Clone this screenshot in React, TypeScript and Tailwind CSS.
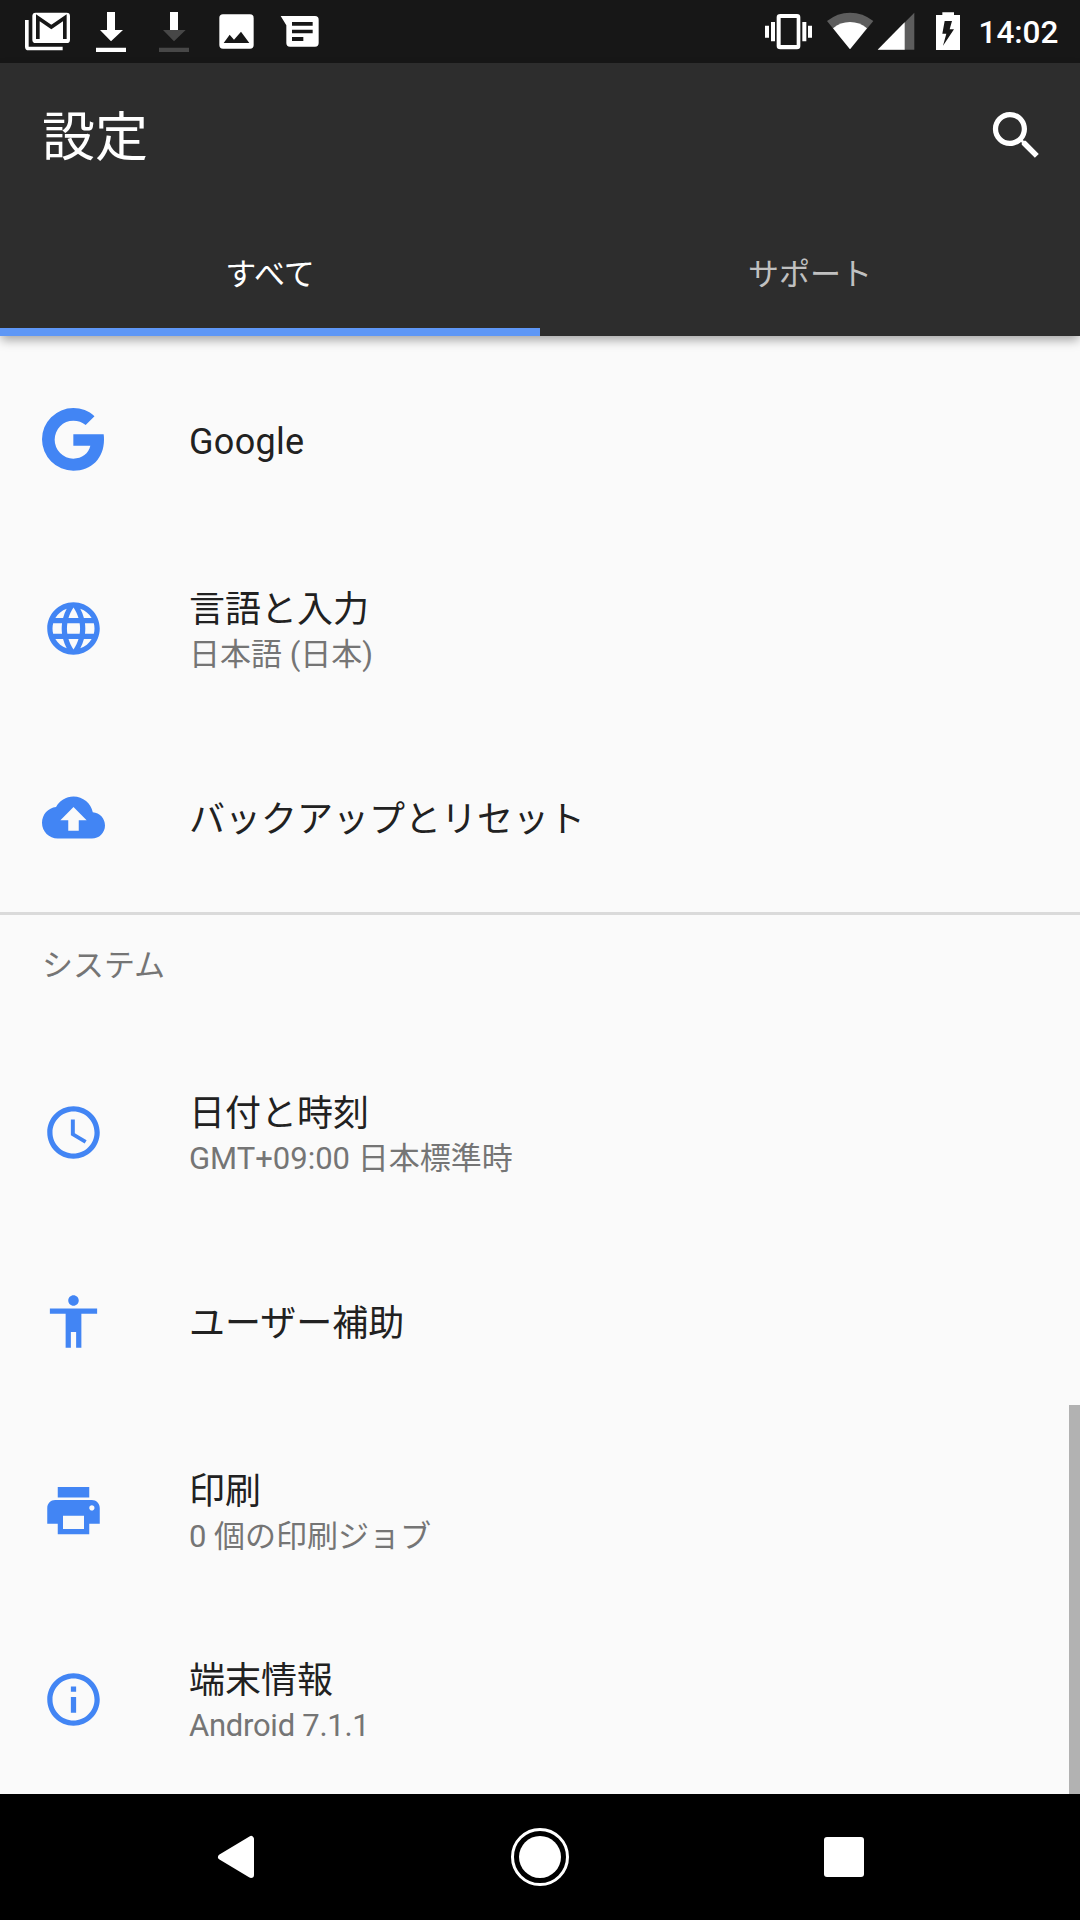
import type { ReactNode } from "react";

const GLYPHS = {
  language:
    "M11.99 2C6.47 2 2 6.48 2 12s4.47 10 9.99 10C17.52 22 22 17.52 22 12S17.52 2 11.99 2zm6.93 6h-2.95c-.32-1.25-.78-2.45-1.38-3.56 1.84.63 3.37 1.91 4.33 3.56zM12 4.04c.83 1.2 1.48 2.53 1.91 3.96h-3.82c.43-1.43 1.08-2.76 1.91-3.96zM4.26 14C4.1 13.36 4 12.69 4 12s.1-1.36.26-2h3.38c-.08.66-.14 1.32-.14 2s.06 1.34.14 2H4.26zm.82 2h2.95c.32 1.25.78 2.45 1.38 3.56-1.84-.63-3.37-1.9-4.33-3.56zm2.95-8H5.08c.96-1.66 2.49-2.93 4.33-3.56C8.81 5.55 8.35 6.75 8.03 8zM12 19.96c-.83-1.2-1.48-2.53-1.91-3.96h3.82c-.43 1.43-1.08 2.76-1.91 3.96zM14.34 14H9.66c-.09-.66-.16-1.32-.16-2s.07-1.35.16-2h4.68c.09.65.16 1.32.16 2s-.07 1.34-.16 2zm.25 5.56c.6-1.11 1.06-2.31 1.38-3.56h2.95c-.96 1.65-2.49 2.93-4.33 3.56zM16.36 14c.08-.66.14-1.32.14-2s-.06-1.34-.14-2h3.38c.16.64.26 1.31.26 2s-.1 1.36-.26 2h-3.38z",
  backup:
    "M19.35 10.04C18.67 6.59 15.64 4 12 4 9.11 4 6.6 5.64 5.35 8.04 2.34 8.36 0 10.91 0 14c0 3.31 2.69 6 6 6h13c2.76 0 5-2.24 5-5 0-2.64-2.05-4.78-4.65-4.96zM14 13v4h-4v-4H7l5-5 5 5h-3z",
  clock:
    "M11.99 2C6.47 2 2 6.48 2 12s4.47 10 9.99 10C17.52 22 22 17.52 22 12S17.52 2 11.99 2zM12 20c-4.42 0-8-3.58-8-8s3.58-8 8-8 8 3.58 8 8-3.58 8-8 8zm.5-13H11v6l5.25 3.15.75-1.23-4.5-2.67z",
  accessibility:
    "M12 2c1.1 0 2 .9 2 2s-.9 2-2 2-2-.9-2-2 .9-2 2-2zm9 7h-6v13h-2v-6h-2v6H9V9H3V7h18v2z",
  print:
    "M19 8H5c-1.66 0-3 1.34-3 3v6h4v4h12v-4h4v-6c0-1.66-1.34-3-3-3zm-3 11H8v-5h8v5zm3-7c-.55 0-1-.45-1-1s.45-1 1-1 1 .45 1 1-.45 1-1 1zm-1-9H6v4h12V3z",
  info: "M11 17h2v-6h-2v6zm1-15C6.48 2 2 6.48 2 12s4.48 10 10 10 10-4.48 10-10S17.52 2 12 2zm0 18c-4.41 0-8-3.59-8-8s3.59-8 8-8 8 3.59 8 8-3.59 8-8 8zM11 9h2V7h-2v2z",
  search:
    "M15.5 14h-.79l-.28-.27C15.41 12.59 16 11.11 16 9.5 16 5.91 13.09 3 9.5 3S3 5.91 3 9.5 5.91 16 9.5 16c1.61 0 3.09-.59 4.23-1.57l.27.28v.79l5 4.99L20.49 19l-4.99-5zm-6 0C7.01 14 5 11.99 5 9.5S7.01 5 9.5 5 14 7.01 14 9.5 11.99 14 9.5 14z",
};

function Glyph({ name }: { name: keyof typeof GLYPHS }) {
  return (
    <svg viewBox="0 0 24 24" className="size-[63px] fill-current">
      <path d={GLYPHS[name]} />
    </svg>
  );
}

function GoogleMark() {
  return (
    <svg viewBox="126 84 189 189" className="size-[63px] fill-current">
      <path d="M311 162.500H220V197.500H271C266 221 246 236 220 236A56 57 0 0 1 220 122C234 122 247 126 257 135L283.500 108.500C266 92 244 84 220 84A94 94 0 0 0 220 272C275 272 312 234 312 179C312 173 312 168 311 162.500Z" />
    </svg>
  );
}

function StatusBar() {
  return (
    <div className="flex h-[63px] items-center bg-[#171717] pl-4 text-white">
      <svg viewBox="48 0 189 189" className="size-[63px]">
        <path d="M75 60H86V140H188V151H86Q75 151 75 140Z" fill="white" />
        <rect x="97" y="38" width="113" height="91" rx="10" fill="white" />
        <path d="M113.500 117V53L154 81L194.500 53V117" fill="none" stroke="#171717" strokeWidth="11" />
      </svg>
      <svg viewBox="237 0 189 189" className="size-[63px] fill-white">
        <path d="M321 36H345V90H369L333 124L300 90H321ZM288 143H378V156H288Z" />
      </svg>
      <svg viewBox="426 0 189 189" className="size-[63px]">
        <path d="M489 90H557L522 124ZM477 143H567V156H477Z" fill="#474747" />
        <path d="M510 36H534V90H510Z" fill="white" />
      </svg>
      <svg viewBox="615 0 189 189" className="size-[63px]">
        <rect x="658" y="43" width="103" height="103" rx="11" fill="white" />
        <path d="M671 129L689 104L702 119L723 95L748 129Z" fill="#171717" />
      </svg>
      <svg viewBox="804 0 189 189" className="size-[63px]">
        <path d="M842 48H945Q956 48 956 59V129Q956 140 945 140H870Q859 140 859 129V76Z" fill="white" />
        <path d="M876 66H938V77H876ZM876 89H938V100H876ZM876 111H910V123H876Z" fill="#171717" />
      </svg>

      <svg viewBox="66 0 159 189" className="ml-auto h-[63px] w-[53px] fill-white">
        <path
          fillRule="evenodd"
          d="M121 42H171Q181 42 181 52V138Q181 148 171 148H121Q110 148 110 138V52Q110 42 121 42ZM122 54V135H170V54Z"
        />
        <path d="M75 77H87V113H75ZM93 66H105V124H93ZM187 66H199V124H187ZM204 77H216V113H204Z" />
      </svg>
      <svg viewBox="225 0 180 189" className="h-[63px] w-[60px]">
        <path d="M261 63Q292 38 330 38Q369 38 400 63L330 148Z" fill="#5d5d5d" />
        <path d="M279 85Q301 66 330 66Q359 66 381 85L330 148Z" fill="white" />
      </svg>
      <svg viewBox="405 0 135 189" className="h-[63px] w-[45px]">
        <path d="M413 149L523 38V149Z" fill="#5d5d5d" />
        <path d="M413 149L494 67V149Z" fill="white" />
      </svg>
      <svg viewBox="540 0 165 189" className="h-[63px] w-[55px]">
        <path d="M588 45H607V37H642V45H660V150H588Z" fill="white" />
        <path d="M614 63H636L629 88H642L609 137L619 101H607Z" fill="#171717" />
      </svg>
      <span className="mr-[20px] w-[85px] whitespace-nowrap pl-[3.500px] pt-[2px] text-[31.5px] font-medium leading-none">
        14:02
      </span>
    </div>
  );
}

function Header() {
  return (
    <header className="relative z-10 bg-[#2d2d2d] text-white shadow-[0_5px_10px_-1px_rgba(0,0,0,0.35)]">
      <div className="flex h-[147px] items-center justify-between pb-[2px] pl-[42px] pr-[32px]">
        <h1 className="pt-[6px] text-[53px] leading-none">設定</h1>
        <Glyph name="search" />
      </div>
      <div className="grid h-[126px] grid-cols-2 text-[31px]">
        <div className="flex items-center justify-center border-b-8 border-[#5e97f6] pt-3">すべて</div>
        <div className="flex items-center justify-center border-b-8 border-transparent pt-3 text-[#c0c0c0]">サポート</div>
      </div>
    </header>
  );
}

function Row({ icon, title, summary }: { icon: ReactNode; title: ReactNode; summary?: ReactNode }) {
  return (
    <div className="flex h-[189px] items-center pl-[42px]">
      <div className="w-[147px] text-[#4285f4]">{icon}</div>
      <div className={summary ? "flex flex-col pt-[7px]" : "flex flex-col pt-[5px]"}>
        <span className="text-[36px] leading-[46px] text-[#212121]">{title}</span>
        {summary && <span className="text-[31px] leading-[44px] text-[#757575]">{summary}</span>}
      </div>
    </div>
  );
}

function NavBar() {
  return (
    <nav className="flex h-[126px] items-center justify-center bg-black">
      <div className="flex w-[304px] justify-center">
        <svg viewBox="0 0 38 44" className="h-11 w-[38px]">
          <path d="M34 4V40L4 22Z" fill="white" stroke="white" strokeWidth="6" strokeLinejoin="round" />
        </svg>
      </div>
      <div className="flex w-[304px] justify-center">
        <div className="flex size-[58px] items-center justify-center rounded-full border-[3px] border-white">
          <div className="size-[42px] rounded-full bg-white" />
        </div>
      </div>
      <div className="flex w-[304px] justify-center">
        <div className="size-10 rounded-[3px] bg-white" />
      </div>
    </nav>
  );
}

export default function App() {
  return (
    <div
      lang="ja"
      className="flex h-[1920px] w-[1080px] flex-col overflow-hidden bg-[#fafafa] font-[Roboto,'Noto_Sans_CJK_JP',sans-serif]"
    >
      <StatusBar />
      <Header />
      <main className="relative flex-1 pt-[9px]">
        <Row icon={<GoogleMark />} title={<span className="tracking-[0.3px]">Google</span>} />
        <Row icon={<Glyph name="language" />} title="言語と入力" summary="日本語 (日本)" />
        <Row icon={<Glyph name="backup" />} title="バックアップとリセット" />
        <div className="h-[126px] border-t-[3px] border-[#dadada] pl-[42px] pt-[29px] text-[31px] leading-[44px] text-[#757575]">
          システム
        </div>
        <Row icon={<Glyph name="clock" />} title="日付と時刻" summary="GMT+09:00 日本標準時" />
        <Row icon={<Glyph name="accessibility" />} title="ユーザー補助" />
        <Row icon={<Glyph name="print" />} title="印刷" summary="0 個の印刷ジョブ" />
        <Row
          icon={<Glyph name="info" />}
          title="端末情報"
          summary={<span className="tracking-[-0.27px]">Android 7.1.1</span>}
        />
        <div className="absolute bottom-0 right-0 h-[389px] w-[11px] bg-[#b2b2b2]" />
      </main>
      <NavBar />
    </div>
  );
}
